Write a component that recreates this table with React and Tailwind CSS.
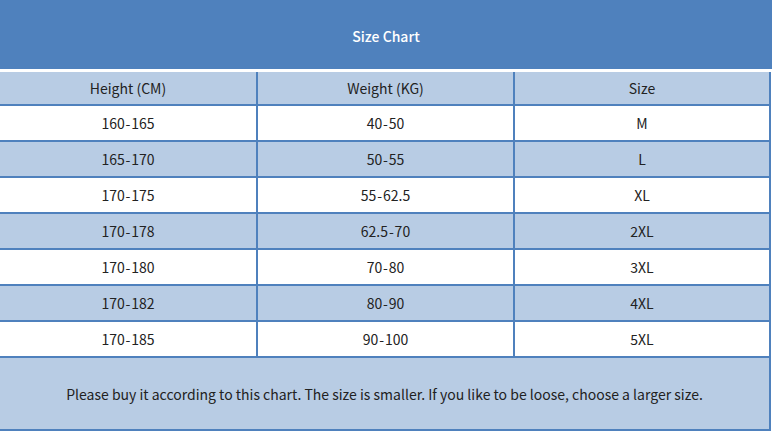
import React from 'react';

const rows = [
  ['160-165', '40-50', 'M'],
  ['165-170', '50-55', 'L'],
  ['170-175', '55-62.5', 'XL'],
  ['170-178', '62.5-70', '2XL'],
  ['170-180', '70-80', '3XL'],
  ['170-182', '80-90', '4XL'],
  ['170-185', '90-100', '5XL'],
];

// the source font puts a little air either side of the dash
const spaced = (s) => s.replace('-', '\u200a-\u200a');

const Cell = ({ children, last }) => (
  <div className={`flex items-center justify-center pt-px ${last ? '' : 'border-r-2 border-[#4f81bd]'}`}>
    {children}
  </div>
);

export default function App() {
  return (
    <div className="w-[772px] h-[431px] bg-white text-[14px] text-[#222] font-['Noto_Sans_CJK_SC',sans-serif] overflow-hidden">
      {/* Title bar */}
      <div className="h-[69px] bg-[#4f81bd] flex items-center justify-center pt-1 text-white font-medium">
        Size Chart
      </div>

      <div className="mt-[3px] w-[771px] border-r-2 border-[#4f81bd]">
        {/* Column headings */}
        <div className="grid grid-cols-[258px_257px_254px] h-[34px] bg-[#b8cce4] border-b-2 border-[#4f81bd]">
          <Cell>Height (CM)</Cell>
          <Cell>Weight (KG)</Cell>
          <Cell last>Size</Cell>
        </div>

        {rows.map((r, i) => (
          <div
            key={i}
            className={`grid grid-cols-[258px_257px_254px] h-[36px] border-b-2 border-[#4f81bd] ${i % 2 === 0 ? 'bg-white' : 'bg-[#b8cce4]'}`}
          >
            <Cell>{spaced(r[0])}</Cell>
            <Cell>{spaced(r[1])}</Cell>
            <Cell last>{r[2]}</Cell>
          </div>
        ))}

        {/* Note */}
        <div className="h-[73px] bg-[#b8cce4] border-b-2 border-[#4f81bd] flex items-center justify-center pt-px">
          Please buy it according to this chart. The size is smaller. If you like to be loose, choose a larger size.
        </div>
      </div>
    </div>
  );
}
